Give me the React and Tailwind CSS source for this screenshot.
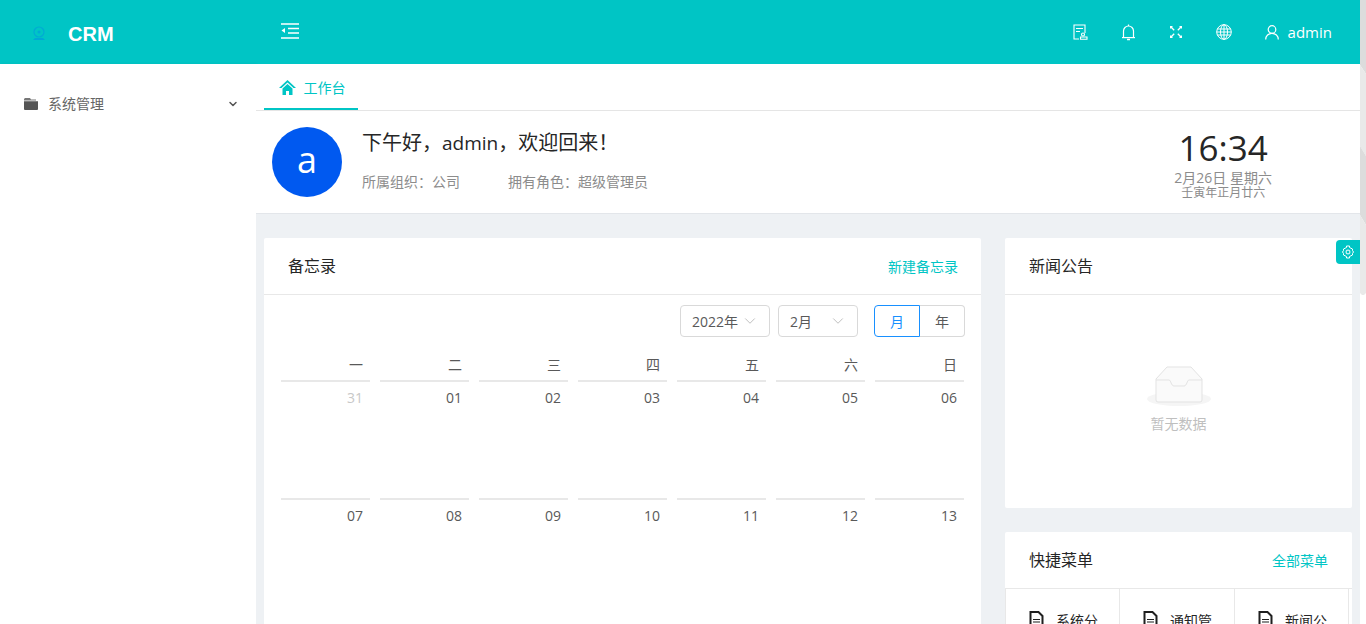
import React from "react";
import { ChevronDown } from "lucide-react";

const sans = "font-['Open_Sans','Noto_Sans_CJK_SC',sans-serif]";

function DocIcon() {
  return (
    <svg width="15" height="17" viewBox="0 0 15 17" fill="none" stroke="#1f1f1f" strokeWidth="2" className="shrink-0">
      <path d="M1.500 1h8l4 4v11h-12z" />
      <path d="M4 8.500h7M4 11h7M4 13.500h7" strokeWidth="1.200" />
    </svg>
  );
}

function Week({ days, muted }) {
  return (
    <div className="grid grid-cols-7 gap-x-[10px]">
      {days.map((d) => (
        <div key={d} className="h-[118px] border-t-2 border-[#e8e8e8] pr-[7px] pt-[5px] text-right text-[14px] leading-[22px] text-[#595959]">
          <span className={d === muted ? "text-[#c8c8c8]" : ""}>{d}</span>
        </div>
      ))}
    </div>
  );
}

const quick = [
  { t: "系统分", w: "w-[114px]" },
  { t: "通知管", w: "w-[115px]" },
  { t: "新闻公", w: "w-[114px]" },
];

export default function App() {
  return (
    <div className={`${sans} flex h-[624px] w-[1366px] overflow-hidden bg-white text-[#333]`}>
      <div className="flex h-full w-[1360px] shrink-0 flex-col">
        <header className="flex h-16 shrink-0 items-center bg-[#00c5c5] pr-[28px] text-white">
          <div className="flex w-[256px] items-center pl-[32px] pt-[3px]">
            <svg width="14" height="16" viewBox="0 0 14 16" fill="none" className="mr-[22px] opacity-80">
              <circle cx="7" cy="6" r="5" stroke="#00a5d8" strokeWidth="1.200" />
              <circle cx="7" cy="6" r="1.500" fill="#00a5d8" />
              <path d="M1 14h12l-2-2H3z" fill="#00a0dc" />
            </svg>
            <span className="font-['Liberation_Sans',sans-serif] text-[20px] font-bold">CRM</span>
          </div>
          <svg width="18" height="16" viewBox="0 0 18 16" className="mb-[3px] ml-[25px]" fill="none" stroke="white" strokeWidth="1.600">
            <path d="M0 1h18M7 5.500h11M7 10h11M0 15h18" />
            <path d="M4 5v5L0.500 7.500z" fill="white" stroke="none" />
          </svg>
          <div className="ml-auto flex items-center">
            <svg width="15" height="16" viewBox="0 0 15 16" fill="none" stroke="white" strokeWidth="1.100" className="mr-[34px]">
              <path d="M6 15H1V1h11v8" />
              <path d="M3 4.500h7M3 7.500h4" />
              <circle cx="10" cy="10.500" r="1.500" />
              <path d="M7.500 15.300v-2.300h6.500v2.300z" />
            </svg>
            <svg width="13" height="17" viewBox="0 0 13 17" fill="none" stroke="white" strokeWidth="1.200" className="mr-[35px]">
              <path d="M1.500 13.500V7a5 5 0 0 1 10 0v6.500" />
              <path d="M0 13.600h13" />
              <path d="M6.500 0.500v1.500" />
              <path d="M5 15.500h3" strokeWidth="1.500" />
            </svg>
            <svg width="12" height="12" viewBox="0 0 12 12" fill="none" stroke="white" strokeWidth="1.300" className="mr-[34px]">
              <path d="M1 1l3.200 3.200M11 1L7.800 4.200M1 11l3.200-3.200M11 11L7.800 7.800" />
              <path d="M0.500 2.500V0.500h2M11.500 2.500V0.500h-2M0.500 9.500v2h2M11.500 9.500v2h-2" />
            </svg>
            <svg width="16" height="16" viewBox="0 0 16 16" fill="none" stroke="white" strokeWidth="1" className="mr-[33px]">
              <circle cx="8" cy="8" r="7.300" />
              <ellipse cx="8" cy="8" rx="3.500" ry="7.300" />
              <path d="M8 0.700v14.600M1.200 5h13.600M1.200 11h13.600M0.700 8h14.600" />
            </svg>
            <svg width="14" height="15" viewBox="0 0 14 15" fill="none" stroke="white" strokeWidth="1.200" className="mr-[9px]">
              <circle cx="7" cy="4.500" r="3.800" />
              <path d="M0.700 14.500c0-3.800 2.800-6.200 6.300-6.200s6.300 2.400 6.300 6.200" />
            </svg>
            <span className="text-[15px]">admin</span>
          </div>
        </header>
        <div className="flex min-h-0 flex-1">
          <aside className="w-[256px] shrink-0 pt-[29px] shadow-[1px_0_3px_rgba(0,0,0,0.06)]">
            <div className="flex items-center pl-[24px] pr-[17px] text-[14px] leading-[22px] text-[#666]">
              <svg width="14" height="12" viewBox="0 0 14 12" className="mr-[10px]">
                <path d="M1 0h5l1 1.500h5v1H0V1z" fill="#777" />
                <path d="M0 3.200h14V11a1 1 0 0 1-1 1H1a1 1 0 0 1-1-1z" fill="#555" />
              </svg>
              <span>系统管理</span>
              <ChevronDown size={12} strokeWidth={3} className="ml-auto text-[#555]" />
            </div>
          </aside>
          <main className="relative flex min-w-0 flex-1 flex-col bg-[#eef1f4]">
            <div className="h-[47px] shrink-0 border-b border-[#e5e5e5] bg-white pl-[8px]">
              <div className="flex h-[46px] w-[94px] items-center justify-center gap-[8px] border-b-2 border-[#00c5c5] pl-[2px] pt-[3px] text-[14px] text-[#00c5c5]">
                <svg width="17" height="15" viewBox="0 0 17 15" fill="#00c5c5"><path d="M8.500 0L17 8h-2.500L8.500 2.500 2.500 8H0z" /><path d="M3.500 8.500l5-4.500 5 4.500V15h-3.500v-4H7v4H3.500z" /></svg>
                <span>工作台</span>
              </div>
            </div>
            <section className="flex h-[103px] shrink-0 items-center border-b border-[#e3e6ea] bg-white pl-[16px] pr-[88px]">
              <div className="flex h-[70px] w-[70px] items-center justify-center rounded-full bg-[#0059f0] pb-[4px] text-[36px] text-white">a</div>
              <div className="mb-[4px] ml-[20px]">
                <div className="text-[20px] leading-[28px] text-[#262626]">下午好，<span className="text-[19px] font-medium">admin</span>，欢迎回来！</div>
                <div className="mt-[15px] flex text-[14px] leading-[20px] text-[#8c8c8c]">
                  <span className="w-[146px]">所属组织：公司</span>
                  <span>拥有角色：超级管理员</span>
                </div>
              </div>
              <div className="ml-auto flex flex-col items-center pt-[2px]">
                <div className="mb-[1px] text-[35px] leading-[44px] text-[#262626]">16:34</div>
                <div className="text-[14px] leading-[14px] text-[#8c8c8c]">2月26日 星期六</div>
                <div className="mt-[1px] text-[12px] leading-[14px] text-[#8c8c8c]">壬寅年正月廿六</div>
              </div>
            </section>
            <div className="flex min-h-0 flex-1 gap-[24px] pl-[8px] pr-[8px] pt-[24px]">
              <section className="h-[600px] w-[717px] shrink-0 rounded-[2px] bg-white">
                <div className="flex h-[57px] items-center justify-between border-b border-[#e8e8e8] pl-[24px] pr-[23px]">
                  <span className="text-[16px] text-[#262626]">备忘录</span>
                  <span className="text-[14px] text-[#00c5c5]">新建备忘录</span>
                </div>
                <div className="pl-[17px] pr-[16px] pt-[10px]">
                  <div className="flex items-center justify-end">
                    <div className="flex h-[32px] w-[90px] items-center justify-between rounded-[4px] border border-[#d9d9d9] pl-[11px] pr-[10px] text-[14px] text-[#595959]">
                      <span>2022年</span><ChevronDown size={18} strokeWidth={1} className="text-[#aaa]" />
                    </div>
                    <div className="ml-[8px] flex h-[32px] w-[80px] items-center justify-between rounded-[4px] border border-[#d9d9d9] pl-[11px] pr-[10px] text-[14px] text-[#595959]">
                      <span>2月</span><ChevronDown size={18} strokeWidth={1} className="text-[#aaa]" />
                    </div>
                    <div className="ml-[16px] flex h-[32px] text-[14px]">
                      <div className="flex w-[46px] items-center justify-center rounded-l-[4px] border border-[#1890ff] text-[#1890ff]">月</div>
                      <div className="flex w-[45px] items-center justify-center rounded-r-[4px] border border-l-0 border-[#d9d9d9] text-[#595959]">年</div>
                    </div>
                  </div>
                  <div className="mt-[17px] grid grid-cols-7 gap-x-[10px] pr-[1px]">
                    {["一", "二", "三", "四", "五", "六", "日"].map((d) => (
                      <div key={d} className="h-[26px] pr-[7px] text-right text-[14px] leading-[22px] text-[#595959]">{d}</div>
                    ))}
                  </div>
                  <div className="pr-[1px]">
                    <Week days={["31", "01", "02", "03", "04", "05", "06"]} muted="31" />
                    <Week days={["07", "08", "09", "10", "11", "12", "13"]} />
                  </div>
                </div>
              </section>
              <div className="flex w-[347px] shrink-0 flex-col gap-[24px]">
                <section className="h-[270px] shrink-0 rounded-[2px] bg-white">
                  <div className="flex h-[57px] items-center border-b border-[#e8e8e8] px-[24px] text-[16px] text-[#262626]">新闻公告</div>
                  <div className="flex flex-col items-center pt-[71px]">
                    <svg width="64" height="41" viewBox="0 0 64 41">
                      <ellipse cx="32" cy="33" rx="32" ry="7" fill="#f5f5f5" />
                      <path d="M9 13L20 1h24l11 12v21a2 2 0 0 1-2 2H11a2 2 0 0 1-2-2z" fill="#fafafa" stroke="#e3e3e3" strokeWidth="1" />
                      <path d="M9 14h13c2 0 2 6 5 6h10c3 0 3-6 5-6h13" fill="none" stroke="#e3e3e3" strokeWidth="1" />
                    </svg>
                    <div className="mt-[7px] text-[14px] leading-[20px] text-[#bfbfbf]">暂无数据</div>
                  </div>
                </section>
                <section className="h-[200px] shrink-0 rounded-[2px] bg-white">
                  <div className="flex h-[57px] items-center justify-between border-b border-[#e8e8e8] pl-[24px] pr-[24px]">
                    <span className="text-[16px] text-[#262626]">快捷菜单</span>
                    <span className="text-[14px] text-[#00c5c5]">全部菜单</span>
                  </div>
                  <div className="flex border-l border-[#e8e8e8]">
                    {quick.map(({ t, w }) => (
                      <div key={t} className={`flex h-[100px] ${w} items-start gap-[12px] border-r border-[#e8e8e8] pl-[23px] pt-[22px] text-[14px] leading-[20px] text-[#262626]`}>
                        <DocIcon /><span>{t}</span>
                      </div>
                    ))}
                  </div>
                </section>
              </div>
            </div>
            <div className="absolute right-0 top-[176px] flex h-[24px] w-[24px] items-center justify-center rounded-l-[4px] bg-[#00c5c5]">
              <svg width="12" height="14" viewBox="0 0 12 14" fill="none" stroke="white" strokeWidth="1">
                <path d="M4.500 1h3v1.500L10.500 4v1.500l1 1.500-1 1.500V10L7.500 11.500V13h-3v-1.500L1.500 10V8.500L0.500 7l1-1.500V4l3-1.500z" />
                <rect x="4.200" y="5.200" width="3.600" height="3.600" rx="0.800" />
              </svg>
            </div>
          </main>
        </div>
      </div>
      <div className="w-[6px] shrink-0">
        <svg width="6" height="296" viewBox="0 0 6 296">
          <path d="M0 0h6v74L0 65z" fill="#dcdcdc" />
          <path d="M0 65l6 9v82l-6-10z" fill="#e9e9e9" />
          <path d="M0 146l6 10v69l-6-10z" fill="#dcdcdc" />
          <path d="M0 215l6 10v68l-2 2H2l-2-2z" fill="#e9e9e9" />
        </svg>
      </div>
    </div>
  );
}
